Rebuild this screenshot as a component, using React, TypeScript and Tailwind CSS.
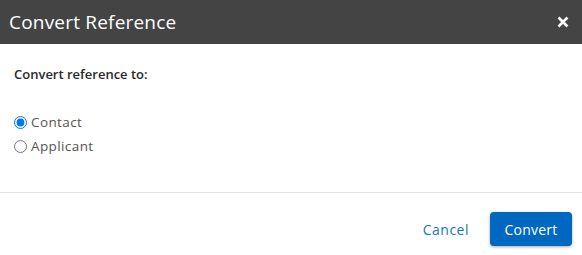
import { useState } from 'react'

export default function App() {
  const [target, setTarget] = useState('contact')

  return (
    <div className="w-[582px] h-[255px] bg-white font-['Open_Sans',sans-serif]">
      <div className="h-[44px] bg-[#444444] flex items-center justify-between pl-[9px] pr-[13px]">
        <h2 className="text-[19px] tracking-[0.2px] text-white">Convert Reference</h2>
        <button type="button" className="text-white">
          <svg width="12" height="12" viewBox="0 0 12 12">
            <path d="M1.5 1.5 L10.5 10.5 M10.5 1.5 L1.5 10.5" stroke="white" strokeWidth="2.6" />
          </svg>
        </button>
      </div>

      <div className="h-[149px] px-[14px] pt-[21px] border-b border-[#e5e5e5]">
        <p className="text-[13px] font-semibold text-[#2a2a2a]">Convert reference to:</p>
        <div className="mt-[28px] flex flex-col gap-[4px]">
          {[
            { value: 'contact', label: 'Contact' },
            { value: 'applicant', label: 'Applicant' },
          ].map((opt) => (
            <label key={opt.value} className="flex items-center gap-[4px] text-[13.5px] tracking-[0.4px] text-[#555] h-[20px]">
              <input
                type="radio"
                name="target"
                checked={target === opt.value}
                onChange={() => setTarget(opt.value)}
                className="m-0 w-[13px] h-[13px]"
              />
              {opt.label}
            </label>
          ))}
        </div>
      </div>

      <div className="flex items-center justify-end gap-[21px] pt-[19px] pr-[10px]">
        <button type="button" className="text-[14px] tracking-[0.5px] text-[#1a73c0]">
          Cancel
        </button>
        <button
          type="button"
          className="w-[82px] h-[34px] rounded-[4px] bg-[#0068c0] text-white text-[14px] tracking-[0.2px] shadow-[0_1px_3px_rgba(0,0,0,0.35)]"
        >
          Convert
        </button>
      </div>
    </div>
  )
}
